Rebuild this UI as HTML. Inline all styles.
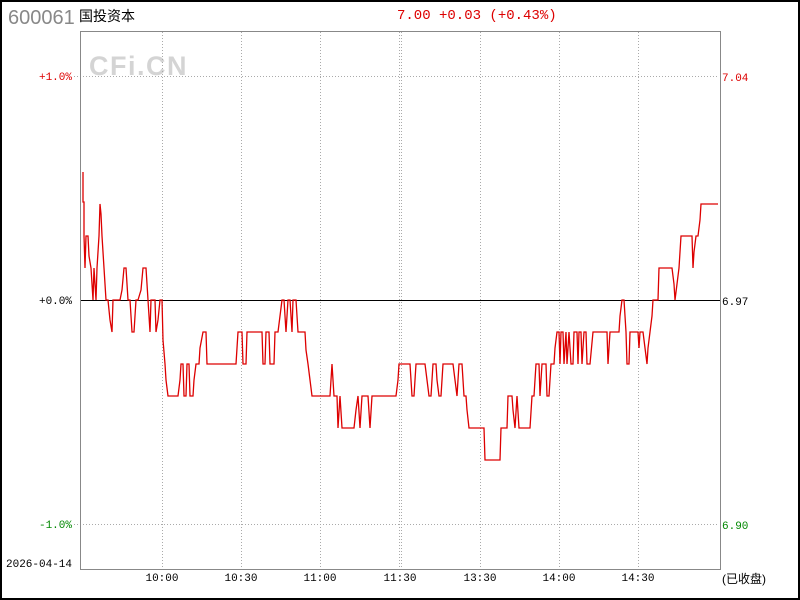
<!DOCTYPE html>
<html><head><meta charset="utf-8"><style>
body{margin:0;width:800px;height:600px;overflow:hidden;background:#fff}
</style></head><body>
<svg width="800" height="600" xmlns="http://www.w3.org/2000/svg" style="position:absolute;left:0;top:0;font-family:'Liberation Mono','Noto Sans CJK SC',monospace">
<rect x="1" y="1" width="798" height="598" fill="#fff" stroke="#000" stroke-width="2"/>
<text x="8" y="24" font-family="'Liberation Sans',sans-serif" font-size="20" fill="#888">600061</text>
<text x="79" y="21" font-family="'Liberation Sans','Noto Sans CJK SC',sans-serif" font-size="14" fill="#000">国投资本</text>
<text x="397" y="19" font-size="14" fill="#d00">7.00 +0.03 (+0.43%)</text>
<text x="89" y="75" font-family="'Liberation Sans',sans-serif" font-weight="bold" font-size="27" letter-spacing="1.5" fill="#d4d4d4">CFi.CN</text>
<g stroke="#aaa" stroke-dasharray="1,2" stroke-width="1">
<line x1="162.5" y1="32" x2="162.5" y2="569"/><line x1="241.5" y1="32" x2="241.5" y2="569"/><line x1="320.5" y1="32" x2="320.5" y2="569"/><line x1="399.5" y1="32" x2="399.5" y2="569"/><line x1="401.5" y1="32" x2="401.5" y2="569"/><line x1="480.5" y1="32" x2="480.5" y2="569"/><line x1="559.5" y1="32" x2="559.5" y2="569"/><line x1="638.5" y1="32" x2="638.5" y2="569"/>
<line x1="74" y1="76.5" x2="718" y2="76.5"/><line x1="74" y1="524.5" x2="718" y2="524.5"/>
</g>
<rect x="80.5" y="31.5" width="640" height="538" fill="none" stroke="#888"/>
<line x1="81" y1="300.5" x2="720" y2="300.5" stroke="#000"/>
<polyline fill="none" stroke="#d00" stroke-width="1.3" points="83,172 83,202 84,202 84,236 85,268 86,236 88,236 89,256 91,268 93,300 94,268 96,300 97,268 99,236 100,204 101,214 102,236 104,268 106,300 108,300 110,320 112,332 113,300 120,300 122,290 124,268 126,268 128,300 130,300 132,332 134,332 136,300 138,300 141,290 143,268 146,268 148,300 150,332 151,300 153,300 155,300 156,332 158,320 160,300 162,300 163,340 165,364 166,380 168,396 178,396 180,380 181,364 183,364 184,396 186,396 187,364 189,364 190,396 193,396 194,380 196,364 199,364 200,348 203,332 206,332 207,364 236,364 237,348 238,332 242,332 243,364 246,364 247,332 262,332 263,364 265,364 266,332 269,332 270,364 274,364 275,332 278,332 280,316 282,300 284,300 286,332 288,300 290,300 292,332 293,300 296,300 298,332 305,332 306,350 308,364 310,380 312,396 330,396 332,364 334,396 337,396 338,428 340,396 342,428 354,428 356,410 358,396 360,428 362,396 368,396 370,428 372,396 396,396 398,380 399,364 410,364 412,396 414,396 416,364 425,364 427,380 429,396 431,396 433,364 436,364 437,380 439,396 441,396 443,364 453,364 455,380 457,396 459,364 462,364 464,396 466,396 467,410 469,428 484,428 485,460 500,460 501,428 507,428 508,396 512,396 513,410 515,428 517,396 519,428 530,428 532,396 534,396 536,364 539,364 540,396 542,364 546,364 547,396 549,396 551,364 554,364 555,348 557,332 559,332 560,364 561,332 563,332 564,364 566,332 567,364 569,332 571,364 573,364 574,332 577,332 578,364 579,332 581,332 582,364 584,332 586,332 587,364 590,364 593,332 607,332 608,364 610,332 619,332 620,316 622,300 624,300 626,332 627,364 629,364 630,332 632,332 634,332 638,332 639,348 640,332 643,332 645,348 647,364 648,348 650,332 652,316 653,300 656,300 658,300 659,268 672,268 674,284 675,300 677,284 679,268 681,236 692,236 693,268 694,252 696,236 698,236 700,220 701,204 718,204"/>
<g font-size="11">
<text x="72" y="80" text-anchor="end" fill="#d00">+1.0%</text>
<text x="72" y="304" text-anchor="end" fill="#000">+0.0%</text>
<text x="72" y="528" text-anchor="end" fill="#080">-1.0%</text>
<text x="722" y="81" fill="#d00">7.04</text>
<text x="722" y="305" fill="#000">6.97</text>
<text x="722" y="529" fill="#080">6.90</text>
<text x="6" y="567" fill="#000">2026-04-14</text>
<g text-anchor="middle" fill="#000">
<text x="162" y="581">10:00</text><text x="241" y="581">10:30</text><text x="320" y="581">11:00</text><text x="400" y="581">11:30</text><text x="480" y="581">13:30</text><text x="559" y="581">14:00</text><text x="638" y="581">14:30</text>
</g>
<text x="722" y="583" font-family="'Liberation Sans','Noto Sans CJK SC',sans-serif" font-size="12" fill="#000">(已收盘)</text>
</g>
</svg>
</body></html>
